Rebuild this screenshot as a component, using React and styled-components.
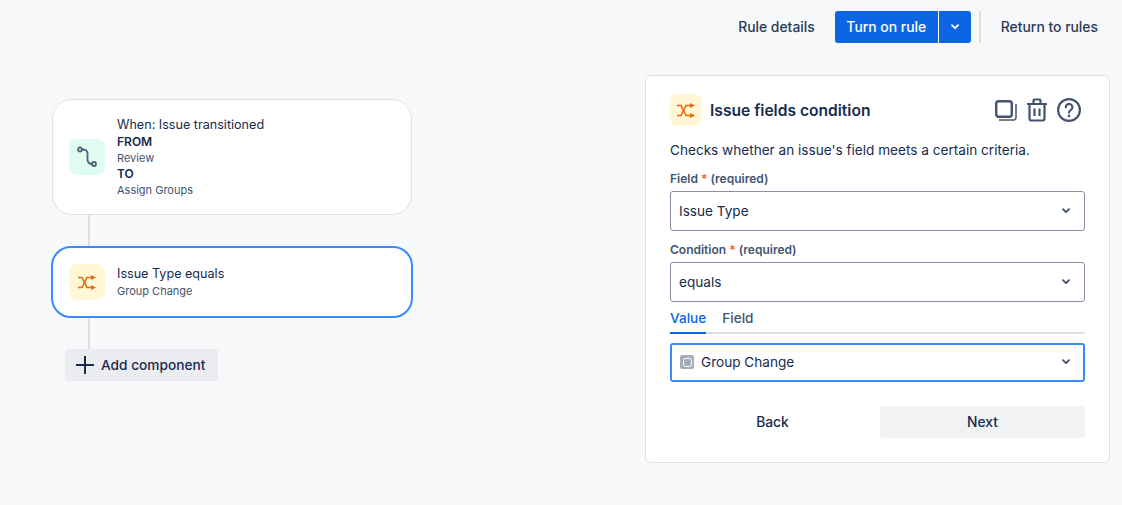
import styled, { createGlobalStyle } from 'styled-components'

const GlobalStyle = createGlobalStyle`
    html, body {
        margin: 0;
        padding: 0;
        background: #f7f8f9;
    }
    * {
        box-sizing: border-box;
    }
`;

const Page = styled.div`
    width: 1122px;
    height: 505px;
    overflow: hidden;
    background: #f7f8f9;
    color: #172b4d;
    font-family: Inter, "Liberation Sans", sans-serif;
    font-size: 13.6px;
`;

const TopBar = styled.header`
    display: flex;
    justify-content: flex-end;
    align-items: center;
    height: 32px;
    margin-top: 11px;
    padding-right: 12px;
    font-size: 13.9px;
`;

const LinkButton = styled.button`
    border: 0;
    background: none;
    padding: 0 12px 1px;
    height: 32px;
    font: inherit;
    font-weight: 500;
    color: #2a3b5a;
`;

const SplitButton = styled.div`
    display: flex;
    height: 32px;
    margin-left: 8px;
    border-radius: 3px;
    overflow: hidden;
    background: #0c66e4;
    color: #fff;
`;

const SplitMain = styled.div`
    display: flex;
    align-items: center;
    width: 104px;
    padding-bottom: 1px;
    justify-content: center;
    font-weight: 500;
    border-right: 1px solid #fff;
`;

const SplitArrow = styled.div`
    display: flex;
    align-items: center;
    justify-content: center;
    width: 32px;
`;

const Divider = styled.div`
    width: 2px;
    height: 32px;
    margin: 0 8px 0 8px;
    background: #dcdfe4;
`;

const Content = styled.main`
    display: flex;
    justify-content: space-between;
    margin-top: 32px;
    padding: 0 12px 0 51px;
`;

const Flow = styled.div`
    display: flex;
    flex-direction: column;
    align-items: flex-start;
    width: 362px;
    padding-top: 24px;
`;

const Node = styled.div`
    display: flex;
    align-items: center;
    gap: 12px;
    background: #fff;
    border-radius: 20px;
    margin: ${(props) => (props.$selected ? '0' : '0 1px')};
    width: ${(props) => (props.$selected ? '362px' : '360px')};
    height: ${(props) => (props.$selected ? '72px' : '116px')};
    padding-left: 16px;
    border: ${(props) => (props.$selected ? '2px solid #388bff' : '1px solid #dfe1e6')};
`;

const IconTile = styled.div`
    display: flex;
    align-items: center;
    justify-content: center;
    flex: none;
    width: ${(props) => props.$size}px;
    height: ${(props) => props.$size}px;
    border-radius: 8px;
    background: ${(props) => props.$bg};
`;

const NodeText = styled.div`
    display: flex;
    flex-direction: column;
    padding-top: 1px;
`;

const NodeTitle = styled.div`
    font-size: 12.6px;
    line-height: 16px;
    margin-bottom: 1px;
    color: #172b4d;
`;

const NodeHeading = styled.div`
    font-size: 12px;
    line-height: 16px;
    font-weight: 600;
    color: #172b4d;
`;

const NodeSub = styled.div`
    font-size: 11px;
    line-height: 16px;
    color: #44546f;
`;

const Connector = styled.div`
    width: 2px;
    height: ${(props) => props.$h}px;
    margin-left: 37px;
    background: #dcdfe4;
`;

const AddButton = styled.button`
    display: flex;
    align-items: center;
    gap: 7px;
    width: 153px;
    height: 32px;
    margin-left: 14px;
    padding: 0 0 0 11px;
    border: 0;
    border-radius: 3px;
    background: #ebecf0;
    font: inherit;
    font-size: 13.7px;
    font-weight: 500;
    color: #172b4d;

    span {
        margin-bottom: 1px;
    }
`;

const Panel = styled.section`
    width: 465px;
    height: 388px;
    padding: 18px 24px 0 24px;
    background: #fff;
    border: 1px solid #dfe1e6;
    border-radius: 6px;
`;

const PanelHead = styled.div`
    display: flex;
    align-items: center;
    height: 32px;
`;

const PanelTitle = styled.h2`
    margin: 0 0 0 8px;
    flex: 1;
    font-size: 15.6px;
    font-weight: 600;
    color: #172b4d;
`;

const PanelTools = styled.div`
    display: flex;
    align-items: center;
    gap: 10px;
    margin-right: 4px;
    color: #44546f;
`;

const Description = styled.p`
    margin: 14px 0 0;
    line-height: 20px;
    color: #172b4d;
`;

const Label = styled.label`
    display: block;
    margin-top: 11px;
    font-size: 12px;
    line-height: 16px;
    font-weight: 600;
    color: #44546f;

    i {
        font-style: normal;
        color: #e56910;
    }
`;

const Select = styled.div`
    display: flex;
    align-items: center;
    gap: 7px;
    height: ${(props) => (props.$focused ? '39px' : '40px')};
    margin-top: ${(props) => (props.$focused ? '9px' : '4px')};
    padding: 0 ${(props) => (props.$focused ? '13px' : '14px')} 1px 8px;
    border: ${(props) => (props.$focused ? '2px solid #388bff' : '1px solid #8590a2')};
    border-radius: 3px;
    color: #172b4d;

    svg:last-child {
        margin-left: auto;
    }
`;

const TypeIcon = styled.span`
    display: flex;
    align-items: center;
    justify-content: center;
    width: 14px;
    height: 14px;
    border-radius: 2px;
    background: #a5adba;

    &::after {
        content: "";
        width: 7px;
        height: 7px;
        border: 1.5px solid #fff;
        border-radius: 2.5px;
    }
`;

const Tabs = styled.div`
    display: flex;
    gap: 16px;
    height: 26px;
    margin-top: 6px;
    border-bottom: 2px solid #dcdfe4;
`;

const Tab = styled.div`
    height: 26px;
    line-height: 20px;
    font-weight: 500;
    color: ${(props) => (props.$active ? '#0c66e4' : '#44546f')};
    border-bottom: 2px solid ${(props) => (props.$active ? '#0c66e4' : 'transparent')};
`;

const Actions = styled.div`
    display: grid;
    grid-template-columns: 1fr 1fr;
    gap: 5px;
    margin-top: 24px;
`;

const ActionButton = styled.button`
    height: 32px;
    padding: 0;
    border: 0;
    border-radius: 3px;
    background: ${(props) => (props.$primary ? '#f1f2f4' : 'transparent')};
    font: inherit;
    font-size: 13.8px;
    font-weight: 500;
    color: #172b4d;
`;

const Chevron = ({ color = '#44546f' }) => (
    <svg width="8" height="6" viewBox="0 0 8 6" fill="none">
        <path d="M1 1.200 4 4.200l3-3" stroke={color} strokeWidth="1.900" strokeLinecap="round" strokeLinejoin="round" />
    </svg>
);

const ShuffleIcon = () => (
    <svg width="18" height="15" viewBox="0 0 18 15" fill="none" stroke="#e56910" strokeWidth="1.600">
        <path d="M0 2.500h4l5 10h5" />
        <path d="M0 12.500h4l5-10h5" />
        <path d="M13 0l5 2.500-5 2.500zM13 10l5 2.500-5 2.500z" fill="#e56910" stroke="none" />
    </svg>
);

const RouteIcon = () => (
    <svg width="22" height="22" viewBox="0 0 22 22" fill="none" stroke="#505f79" strokeWidth="1.800">
        <circle cx="4" cy="3.500" r="2" />
        <circle cx="18" cy="18" r="2" />
        <path d="M6 3.500c4 0 5 .8 5.500 3.500v7c.5 3 2 4 4.500 4" />
    </svg>
);

const CopyIcon = () => (
    <svg width="22" height="21" viewBox="0 0 22 21" fill="none" stroke="#44546f">
        <rect x="1.200" y="1.200" width="15.600" height="15.600" rx="2.500" strokeWidth="2.400" />
        <path d="M21 4v13.500a2.500 2.500 0 0 1-2.500 2.500H4" strokeWidth="1.500" />
    </svg>
);

const TrashIcon = () => (
    <svg width="20" height="24" viewBox="0 0 20 24" fill="none" stroke="#44546f" strokeWidth="2.200">
        <path d="M0 6h20M6.500 6V2.500a1 1 0 0 1 1-1h5a1 1 0 0 1 1 1V6" />
        <path d="M2.500 6v14.500a2 2 0 0 0 2 2h11a2 2 0 0 0 2-2V6" />
        <path d="M7.500 10.500v7.500M12.500 10.500v7.500" />
    </svg>
);

const HelpIcon = () => (
    <svg width="24" height="24" viewBox="0 0 24 24" fill="none" stroke="#44546f" strokeWidth="2.200" strokeLinecap="round">
        <circle cx="12" cy="12" r="10.900" />
        <path d="M8.800 9.300a3.300 3.300 0 1 1 5 2.800c-1.100.7-1.800 1.200-1.800 2.400" />
        <path d="M12 17.800v.1" strokeWidth="2.600" />
    </svg>
);

const PlusIcon = () => (
    <svg width="18" height="18" viewBox="0 0 18 18" fill="none" stroke="#172b4d" strokeWidth="2">
        <path d="M9 0v18M0 9h18" />
    </svg>
);

export default function App() {
    return (
        <Page>
            <GlobalStyle />
            <TopBar>
                <LinkButton>Rule details</LinkButton>
                <SplitButton>
                    <SplitMain>Turn on rule</SplitMain>
                    <SplitArrow>
                        <Chevron color="#fff" />
                    </SplitArrow>
                </SplitButton>
                <Divider />
                <LinkButton>Return to rules</LinkButton>
            </TopBar>
            <Content>
                <Flow>
                    <Node>
                        <IconTile $size={36} $bg="#dffcf0">
                            <RouteIcon />
                        </IconTile>
                        <NodeText>
                            <NodeTitle>When: Issue transitioned</NodeTitle>
                            <NodeHeading>FROM</NodeHeading>
                            <NodeSub>Review</NodeSub>
                            <NodeHeading>TO</NodeHeading>
                            <NodeSub>Assign Groups</NodeSub>
                        </NodeText>
                    </Node>
                    <Connector $h={31} />
                    <Node $selected>
                        <IconTile $size={36} $bg="#fff7d6">
                            <ShuffleIcon />
                        </IconTile>
                        <NodeText>
                            <NodeTitle>Issue Type equals</NodeTitle>
                            <NodeSub>Group Change</NodeSub>
                        </NodeText>
                    </Node>
                    <Connector $h={31} />
                    <AddButton>
                        <PlusIcon />
                        <span>Add component</span>
                    </AddButton>
                </Flow>
                <Panel>
                    <PanelHead>
                        <IconTile $size={32} $bg="#fff7d6">
                            <ShuffleIcon />
                        </IconTile>
                        <PanelTitle>Issue fields condition</PanelTitle>
                        <PanelTools>
                            <CopyIcon />
                            <TrashIcon />
                            <HelpIcon />
                        </PanelTools>
                    </PanelHead>
                    <Description>Checks whether an issue's field meets a certain criteria.</Description>
                    <Label>
                        Field <i>*</i> (required)
                    </Label>
                    <Select>
                        Issue Type
                        <Chevron />
                    </Select>
                    <Label>
                        Condition <i>*</i> (required)
                    </Label>
                    <Select>
                        equals
                        <Chevron />
                    </Select>
                    <Tabs>
                        <Tab $active>Value</Tab>
                        <Tab>Field</Tab>
                    </Tabs>
                    <Select $focused>
                        <TypeIcon />
                        Group Change
                        <Chevron />
                    </Select>
                    <Actions>
                        <ActionButton>Back</ActionButton>
                        <ActionButton $primary>Next</ActionButton>
                    </Actions>
                </Panel>
            </Content>
        </Page>
    );
}
